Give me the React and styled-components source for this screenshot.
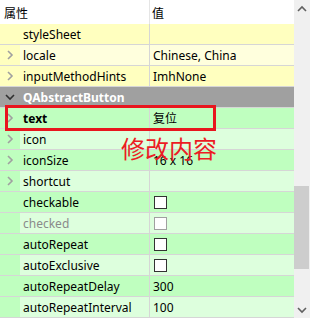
import styled, { createGlobalStyle } from "styled-components";

const GlobalStyle = createGlobalStyle`
  html, body {
    margin: 0;
    padding: 0;
    background: #ffffff;
  }
  body {
    font-family: "Noto Sans", "Noto Sans CJK SC", sans-serif;
    font-size: 12px;
    color: #000000;
  }
`;

const palette = {
  yellow: { base: "#ffffbf", alt: "#ffffdd" },
  green: { base: "#bfffbf", alt: "#ddffdd" },
};

const Frame = styled.div`
  display: flex;
  width: 310px;
  height: 318px;
  overflow: hidden;
  position: relative;
`;

const Tree = styled.div`
  width: 294px;
  display: flex;
  flex-direction: column;
`;

const Header = styled.div`
  display: grid;
  grid-template-columns: 150px 1fr;
  height: 24px;
  flex-shrink: 0;
  background: #ffffff;
`;

const HeaderCell = styled.div`
  display: flex;
  align-items: center;
  padding-left: ${(p) => (p.$first ? "4px" : "2px")};
  border-right: ${(p) => (p.$first ? "1px solid #e5e5e5" : "none")};
  font-family: "Noto Sans CJK SC", sans-serif;
  font-size: 12px;
`;

const Row = styled.div`
  display: grid;
  grid-template-columns: 20px 130px 1fr;
  height: 21px;
  flex-shrink: 0;
  box-sizing: border-box;
  border-bottom: 1px solid #d6d6d6;
  background: ${(p) => palette[p.$tone][p.$alt ? "alt" : "base"]};
`;

const Branch = styled.div`
  display: flex;
  align-items: center;
  justify-content: center;
  background: ${(p) => palette[p.$tone].base};
`;

const NameCell = styled.div`
  display: flex;
  align-items: center;
  padding-left: 3px;
  border-right: 1px solid #d6d6d6;
  font-weight: ${(p) => (p.$bold ? 700 : 400)};
  color: ${(p) => (p.$disabled ? "#8a8a8a" : "#000")};
  white-space: nowrap;
`;

const ValueCell = styled.div`
  display: flex;
  align-items: center;
  padding-left: 3px;
  white-space: nowrap;
  font-family: "Noto Sans", "Noto Sans CJK SC", sans-serif;
`;

const GroupRow = styled.div`
  display: flex;
  align-items: center;
  height: 21px;
  flex-shrink: 0;
  box-sizing: border-box;
  background: #a0a0a0;
  border-bottom: 1px solid #d6d6d6;
  color: #ffffff;
  font-weight: 700;
`;

const GroupBranch = styled.div`
  width: 20px;
  display: flex;
  align-items: center;
  justify-content: center;
`;

const GroupTitle = styled.span`
  padding-left: 3px;
`;

const Check = styled.span`
  width: 11px;
  height: 11px;
  border: 1px solid ${(p) => (p.$disabled ? "#a0a0a0" : "#333")};
  background: #fff;
  margin-left: 1px;
`;

const Scrollbar = styled.div`
  width: 16px;
  background: #f0f0f0;
  display: flex;
  flex-direction: column;
  align-items: center;
`;

const ArrowBtn = styled.div`
  height: 17px;
  width: 16px;
  display: flex;
  align-items: center;
  justify-content: center;
  flex-shrink: 0;
`;

const Track = styled.div`
  flex: 1;
  width: 100%;
  display: flex;
  flex-direction: column;
  padding-top: 169px;
  box-sizing: border-box;
`;

const Thumb = styled.div`
  height: 83px;
  width: 15px;
  background: #cdcdcd;
`;

const Highlight = styled.div`
  position: absolute;
  left: 5px;
  top: 105px;
  width: 211px;
  height: 26px;
  box-sizing: border-box;
  border: 3px solid #e8161e;
`;

const Note = styled.div`
  position: absolute;
  left: 121px;
  top: 132px;
  color: #ec1c24;
  font-family: "Noto Sans CJK SC", sans-serif;
  font-size: 24px;
  line-height: 32px;
  letter-spacing: 0;
`;

function Chevron({ dir = "right", color = "#a0a0a0" }) {
  const paths = {
    right: "M2 1 L6 5 L2 9",
    down: "M1 3 L5 7 L9 3",
    up: "M1 7 L5 3 L9 7",
  };
  const size = dir === "right" ? [8, 10] : [10, 10];
  return (
    <svg width={size[0]} height={size[1]} viewBox={`0 0 ${size[0]} ${size[1]}`}>
      <path d={paths[dir]} fill="none" stroke={color} strokeWidth="1.6" />
    </svg>
  );
}

const yellowRows = [
  { name: "styleSheet", value: "" },
  { name: "locale", value: "Chinese, China", expand: true },
  { name: "inputMethodHints", value: "ImhNone", expand: true },
];

const greenRows = [
  { name: "text", value: "复位", expand: true, bold: true },
  { name: "icon", value: "", expand: true },
  { name: "iconSize", value: "16 x 16", expand: true },
  { name: "shortcut", value: "", expand: true },
  { name: "checkable", check: true },
  { name: "checked", check: true, disabled: true },
  { name: "autoRepeat", check: true },
  { name: "autoExclusive", check: true },
  { name: "autoRepeatDelay", value: "300" },
  { name: "autoRepeatInterval", value: "100" },
];

function PropRow({ row, tone, alt }) {
  return (
    <Row $tone={tone} $alt={alt}>
      <Branch $tone={tone}>{row.expand && <Chevron />}</Branch>
      <NameCell $bold={row.bold} $disabled={row.disabled}>
        {row.name}
      </NameCell>
      <ValueCell>
        {row.check ? <Check $disabled={row.disabled} /> : row.value}
      </ValueCell>
    </Row>
  );
}

export default function App() {
  return (
    <>
      <GlobalStyle />
      <Frame>
        <Tree>
          <Header>
            <HeaderCell $first>属性</HeaderCell>
            <HeaderCell>值</HeaderCell>
          </Header>
          {yellowRows.map((r, i) => (
            <PropRow key={r.name} row={r} tone="yellow" alt={i % 2 === 1} />
          ))}
          <GroupRow>
            <GroupBranch>
              <Chevron dir="down" color="#303030" />
            </GroupBranch>
            <GroupTitle>QAbstractButton</GroupTitle>
          </GroupRow>
          {greenRows.map((r, i) => (
            <PropRow key={r.name} row={r} tone="green" alt={i % 2 === 1} />
          ))}
        </Tree>
        <Scrollbar>
          <ArrowBtn>
            <Chevron dir="up" color="#606060" />
          </ArrowBtn>
          <Track>
            <Thumb />
          </Track>
          <ArrowBtn>
            <Chevron dir="down" color="#606060" />
          </ArrowBtn>
        </Scrollbar>
        <Highlight />
        <Note>修改内容</Note>
      </Frame>
    </>
  );
}
